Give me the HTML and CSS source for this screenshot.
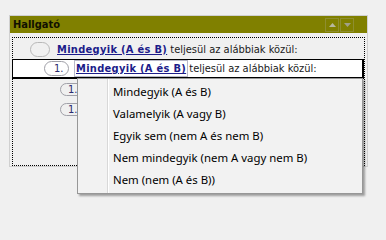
FILE: index.html
```html
<!DOCTYPE html>
<html lang="hu">
<head>
<meta charset="utf-8">
<title>Hallgató</title>
<link rel="stylesheet" href="styles.css">
</head>
<body>
<div class="panel">
  <div class="header">
    <span class="title">Hallgató</span>
    <div class="btns">
      <span class="btn"><svg width="7" height="4" viewBox="0 0 7 4"><polygon points="0,4 7,4 3.5,0" fill="#b8b8a0"/></svg></span>
      <span class="btn"><svg width="7" height="4" viewBox="0 0 7 4"><polygon points="0,0 7,0 3.5,4" fill="#a0a088"/></svg></span>
    </div>
  </div>
  <div class="tree">
    <div class="row lvl0">
      <span class="pill empty"></span>
      <span class="cond"><a class="link">Mindegyik (A és B)</a> teljesül az alábbiak közül:</span>
    </div>
    <div class="row lvl1 selected">
      <span class="pill">1.</span>
      <span class="cond"><a class="link focus">Mindegyik (A és B)</a> teljesül az alábbiak közül:</span>
    </div>
    <div class="row lvl2">
      <span class="pill">1.</span>
    </div>
    <div class="row lvl2">
      <span class="pill">1.</span>
    </div>
  </div>
  <ul class="menu">
    <li>Mindegyik (A és B)</li>
    <li>Valamelyik (A vagy B)</li>
    <li>Egyik sem (nem A és nem B)</li>
    <li>Nem mindegyik (nem A vagy nem B)</li>
    <li>Nem (nem (A és B))</li>
  </ul>
</div>
</body>
</html>
```

FILE: styles.css
```css
html, body {
  margin: 0;
  padding: 0;
  background: #f0f0f0;
}
body {
  min-height: 213px;
  overflow: hidden;
  font-family: "DejaVu Sans Condensed", "DejaVu Sans", sans-serif;
  font-size: 11px;
  color: #1a1a1a;
}
.panel {
  position: relative;
  margin: 15px 0 0 9px;
  width: 359px;
  height: 152px;
  box-sizing: border-box;
  border: 1px solid #d0d0d0;
}
.header {
  height: 17px;
  background: #808000;
  display: flex;
  align-items: center;
  justify-content: space-between;
  padding: 0 13px 0 3px;
}
.title {
  font-weight: bold;
  color: #101000;
  font-size: 11px;
}
.btns {
  display: flex;
  gap: 1px;
}
.btn {
  width: 12px;
  height: 12px;
  border: 1px solid #8e8e30;
  display: flex;
  align-items: center;
  justify-content: center;
}
.tree {
  margin: 4px 2px 0 2px;
  border: 1px dotted #000;
  height: 126px;
  padding-top: 1px;
}
.row {
  height: 20px;
  display: flex;
  align-items: center;
  box-sizing: border-box;
}
.lvl0 { padding-left: 17px; }
.lvl1 { padding-left: 31px; }
.lvl2 { padding-left: 47px; }
.selected {
  background: #fff;
  margin-left: -1px;
  border-top: 1px solid #000;
  border-left: 1px solid #000;
  border-right: 2px solid #000;
  border-bottom: 2px solid #000;
}
.pill {
  box-sizing: border-box;
  height: 15px;
  min-width: 25px;
  border: 1px solid #a0a0a8;
  border-radius: 8px;
  padding-left: 9px;
  font-size: 11px;
  line-height: 13px;
  color: #2a2a70;
  margin-right: 7px;
}
.pill.empty {
  min-width: 20px;
  width: 20px;
  padding: 0;
  border-color: #b8b8b8;
}
.lvl2 .pill {
  height: 13px;
  line-height: 11px;
  padding-left: 7px;
}
.cond {
  white-space: nowrap;
}
.link {
  color: #1c1c8a;
  font-weight: bold;
  text-decoration: underline;
  letter-spacing: 0.3px;
}
.link.focus {
  outline: 1px solid #b8b8c8;
  outline-offset: 1px;
}
.menu {
  position: absolute;
  left: 67px;
  top: 62px;
  width: 286px;
  margin: 0;
  padding: 2px 0;
  list-style: none;
  background: #f2f2f2;
  border: 1px solid #979797;
  box-shadow: 2px 2px 2px rgba(0, 0, 0, 0.35);
  font-family: "Noto Sans", sans-serif;
  font-size: 11.4px;
  color: #000;
  box-sizing: border-box;
}
.menu::before {
  content: "";
  position: absolute;
  left: 29px;
  top: 0;
  bottom: 0;
  width: 1px;
  background: #d8d8d8;
  border-right: 1px solid #fff;
}
.menu li {
  height: 22px;
  line-height: 22px;
  padding-left: 35px;
}
```
